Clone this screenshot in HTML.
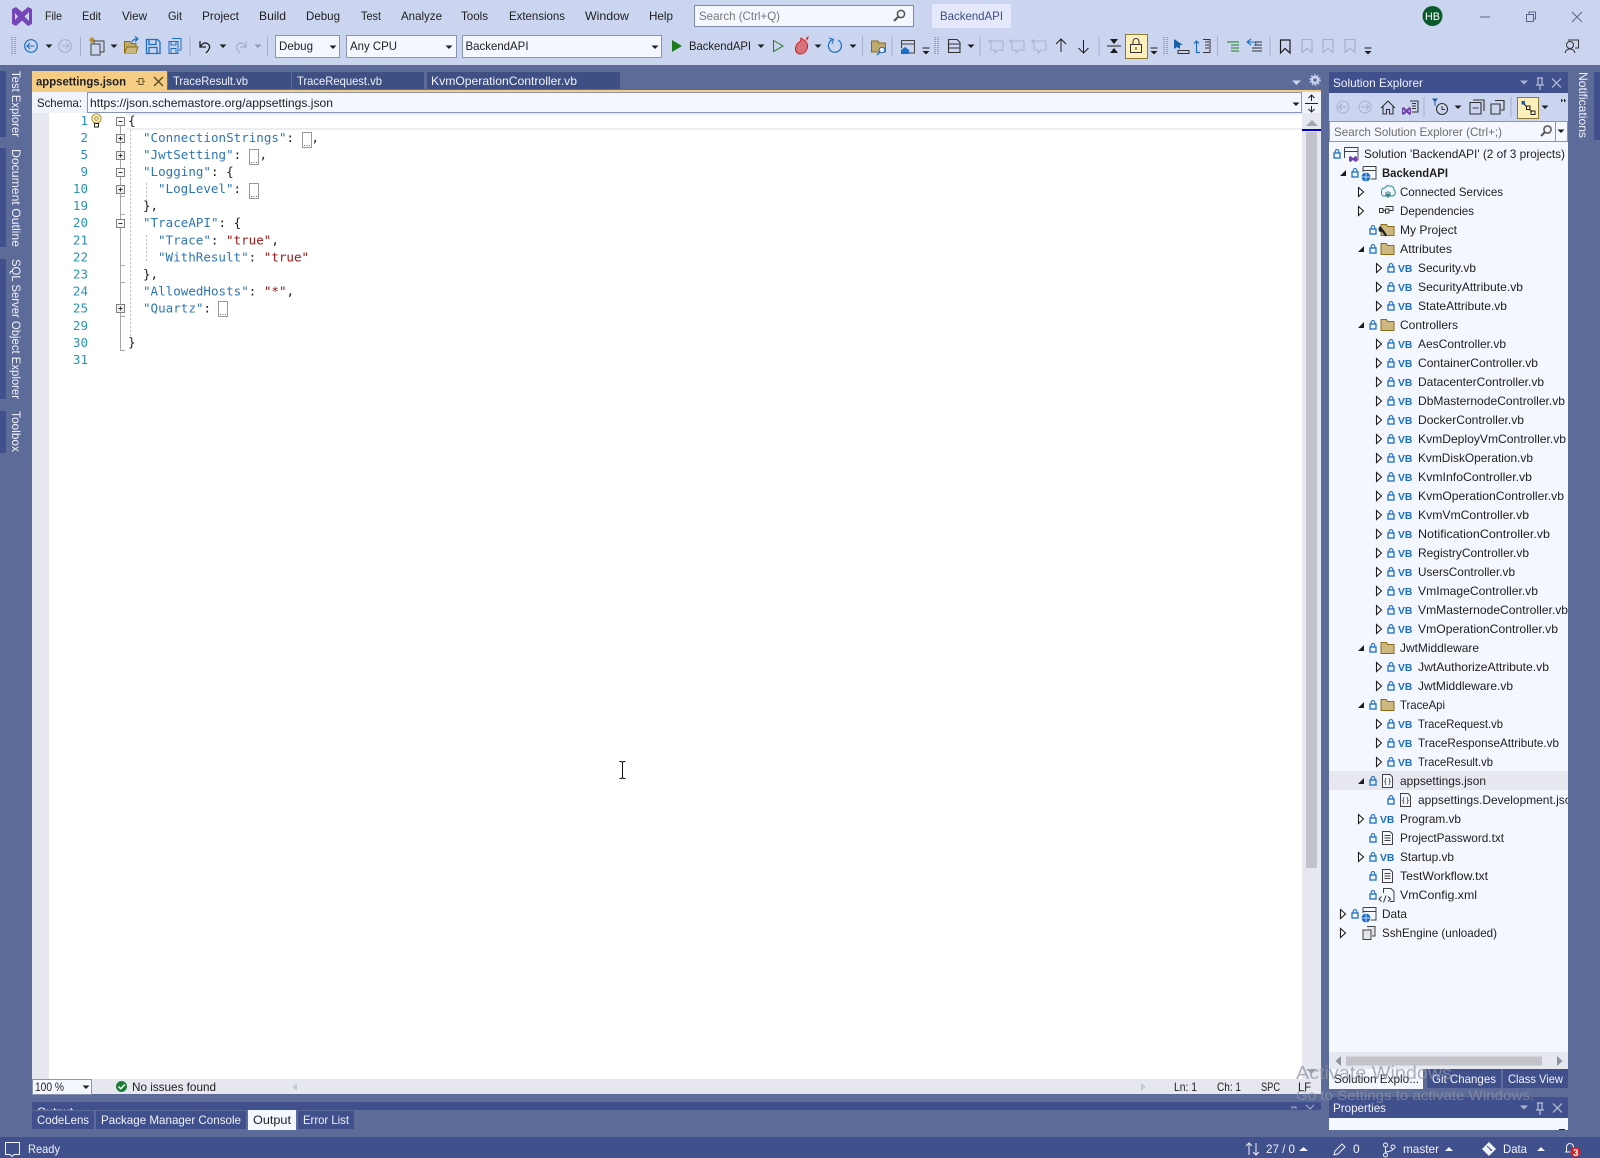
<!DOCTYPE html>
<html>
<head>
<meta charset="utf-8">
<title>BackendAPI - Visual Studio</title>
<style>
html,body{margin:0;padding:0;background:#5D6B99;width:1600px;height:1158px;overflow:hidden}
svg{display:block}
text{font-family:"Liberation Sans",sans-serif;font-size:12px;fill:#1e1e1e;white-space:pre}
.m text{font-family:"DejaVu Sans Mono","Liberation Mono",monospace;font-size:12.55px}
.k{fill:#2e75b6}.s{fill:#a31515}.n{fill:#2b91af}
.w text,text.w{fill:#f0f2fc}
.vb{font-size:10.3px;font-weight:bold;fill:#1b6ec2}
</style>
</head>
<body>
<svg width="1600" height="1158" viewBox="0 0 1600 1158" xmlns="http://www.w3.org/2000/svg">
<defs>
<g id="lk"><rect x="-3" y="-1" width="6" height="5" fill="none" stroke="#1b6ec2" stroke-width="1.3"/><path d="M-1.8-1v-1.6a1.8 1.8 0 0 1 3.6 0v1.6" fill="none" stroke="#1b6ec2" stroke-width="1.1"/></g>
<path id="ar" d="M-2.5-4.5L2.5 0L-2.5 4.5Z" fill="#fff" stroke="#1e1e1e" stroke-width="1.1"/>
<path id="ex" d="M3-3V3H-3Z" fill="#1e1e1e"/>
<path id="fd" d="M-6.5-5.5H-1L0-3.5H6.5V5.5H-6.5Z" fill="#cdb880" stroke="#8a6c14"/>
<path id="dn" d="M-3.5-1.5H3.5L0 2Z" fill="#1e1e1e"/>
<path id="dg" d="M-3.5-1.5H3.5L0 2Z" fill="#8f97b0"/>
<g id="ov"><path d="M-3.5-3H3.5" stroke="#1e1e1e"/><path d="M-3.5 0H3.5L0 3.5Z" fill="#1e1e1e"/></g>
<g id="txt"><path d="M-5-6.5H2.5L5-4V6.5H-5Z" fill="#f6f8ff" stroke="#424242"/><path d="M-3-2.5H3M-3 0H3M-3 2.5H3" stroke="#424242"/></g>
<g id="js"><path d="M-5-6.5H2.5L5-4V6.5H-5Z" fill="#f6f8ff" stroke="#424242"/><path d="M-1.2-2.5Q-2.6-2.5-2.2-.8T-3.2 .5Q-1.8 .5-2.2 2T-1.2 3.5M1.2-2.5Q2.6-2.5 2.2-.8T3.2 .5Q1.8 .5 2.2 2T1.2 3.5" fill="none" stroke="#424242" stroke-width=".8"/></g>
<g id="plus"><rect x="-4" y="-4" width="8" height="8" fill="#eee" stroke="#808080"/><path d="M-2 0H2M0-2V2" stroke="#333"/></g>
<g id="minus"><rect x="-4" y="-4" width="8" height="8" fill="#f8f8f8" stroke="#808080"/><path d="M-2 0H2" stroke="#333"/></g>
<g id="grip"><path d="M0 0V17M3 0V17" stroke="#6d7a9e" stroke-width="1.2" stroke-dasharray="1 1" fill="none"/></g>
<g id="cmt"><path d="M-6-5H6V4H1L-2 7V4H-6Z" fill="none" stroke="#a8b2cc"/><path d="M-7-7V-3M-9-5H-5" stroke="#a8b2cc"/></g>
<g id="bm"><path d="M-5-6.5H5V6.5L0 2.5L-5 6.5Z" fill="none" stroke="#a8b2cc" stroke-width="1.2"/></g>
<clipPath id="treeclip"><rect x="1329" y="142" width="239" height="910"/></clipPath>
<clipPath id="outclip"><rect x="32" y="1102" width="1289" height="8"/></clipPath>
</defs>

<!-- base -->
<rect width="1600" height="1158" fill="#5D6B99"/>
<rect width="1600" height="65" fill="#CCD5F0"/>

<!-- logo -->
<path d="M12 9L16 7L22 12L28 7L32 9V24L28 26L22 20.5L16 26L12 24ZM15 13V20L18 16.5ZM29 12L24.5 16.5L29 21Z" fill="#7645b8" fill-rule="evenodd"/>

<!-- menu -->
<text x="45" y="20" textLength="17" lengthAdjust="spacingAndGlyphs">File</text>
<text x="82" y="20" textLength="19" lengthAdjust="spacingAndGlyphs">Edit</text>
<text x="122" y="20" textLength="25" lengthAdjust="spacingAndGlyphs">View</text>
<text x="168" y="20" textLength="14" lengthAdjust="spacingAndGlyphs">Git</text>
<text x="202" y="20" textLength="37" lengthAdjust="spacingAndGlyphs">Project</text>
<text x="259" y="20" textLength="27" lengthAdjust="spacingAndGlyphs">Build</text>
<text x="306" y="20" textLength="34" lengthAdjust="spacingAndGlyphs">Debug</text>
<text x="361" y="20" textLength="20" lengthAdjust="spacingAndGlyphs">Test</text>
<text x="401" y="20" textLength="41" lengthAdjust="spacingAndGlyphs">Analyze</text>
<text x="461" y="20" textLength="27" lengthAdjust="spacingAndGlyphs">Tools</text>
<text x="509" y="20" textLength="56" lengthAdjust="spacingAndGlyphs">Extensions</text>
<text x="585" y="20" textLength="44" lengthAdjust="spacingAndGlyphs">Window</text>
<text x="649" y="20" textLength="24" lengthAdjust="spacingAndGlyphs">Help</text>

<!-- search + title -->
<rect x="694.5" y="5.5" width="219" height="21" fill="#F5F7FF" stroke="#7f8aa8"/>
<text x="699" y="20" style="fill:#777" textLength="81" lengthAdjust="spacingAndGlyphs">Search (Ctrl+Q)</text>
<circle cx="901" cy="14" r="3.6" fill="none" stroke="#555" stroke-width="1.5"/><path d="M898.5 16.5L894 21" stroke="#555" stroke-width="2"/>
<rect x="932" y="4" width="79" height="24" fill="#E3E9FA"/>
<text x="940" y="20" style="fill:#3d4f81" textLength="63" lengthAdjust="spacingAndGlyphs">BackendAPI</text>

<!-- user / window -->
<circle cx="1432.5" cy="16" r="10" fill="#0b5a2b"/>
<text x="1425" y="20" style="fill:#fff;font-size:11px" textLength="15" lengthAdjust="spacingAndGlyphs">HB</text>
<path d="M1480 17H1490" stroke="#5a6688"/>
<path d="M1526.5 14.5H1533.5V21.5H1526.5ZM1529 14V12H1535.5V19H1534" fill="none" stroke="#5a6688"/>
<path d="M1572 12L1582 22M1582 12L1572 22" stroke="#5a6688"/>

<!-- toolbar -->
<use href="#grip" x="12" y="37"/>
<circle cx="31" cy="46" r="6.3" fill="none" stroke="#1b6ec2" stroke-width="1.2"/><path d="M34.5 46H27.5M30 43L27 46L30 49" fill="none" stroke="#1b6ec2"/>
<use href="#dn" x="49" y="46"/>
<circle cx="65" cy="46" r="6.3" fill="none" stroke="#a8b2cc" stroke-width="1.2"/><path d="M61.5 46H68.5M66 43L69 46L66 49" fill="none" stroke="#a8b2cc"/>
<path d="M80.5 37V56" stroke="#a3afcc"/>
<path d="M94 41H104V52H94Z" fill="none" stroke="#424242"/><path d="M91 44H100V55H91Z" fill="#CCD5F0" stroke="#424242"/>
<path d="M92 37V43M89 40H95M90 38L94 42M94 38L90 42" stroke="#b08a1e"/>
<use href="#dn" x="114" y="46"/>
<path d="M124.5 41.5H130L131.5 43.5H136V53H124.5Z" fill="#c0aa70" stroke="#8a6c14"/><path d="M124.5 53L127 47H138L136 53" fill="#cdb880" stroke="#8a6c14"/><path d="M132 42Q133 39 137 39M135 36.5L138 39L135 41.5" fill="none" stroke="#1b6ec2" stroke-width="1.2"/>
<path d="M146.5 39.5H157.5L160 42V53.5H146.5ZM149 39.5V44.5H156V39.5M149 53.5V47.5H157V53.5" fill="none" stroke="#1b6ec2" stroke-width="1.3"/>
<path d="M172 38.5H181V50H179M169 41.5H178V53.5H169ZM171 41.5V45H176V41.5M171 53.5V48.5H176V53.5" fill="none" stroke="#1b6ec2"/>
<path d="M190 37V56" stroke="#a3afcc"/>
<path d="M200 41V47H206M200.5 46.5Q204 41 208 44T206 53" fill="none" stroke="#1e1e1e" stroke-width="1.3"/>
<use href="#dn" x="223" y="46"/>
<path d="M246 41V47H240M245.5 46.5Q242 41 238 44T240 53" fill="none" stroke="#a8b2cc" stroke-width="1.3"/>
<use href="#dg" x="258" y="46"/>
<path d="M267.5 37V56" stroke="#a3afcc"/>

<rect x="275.5" y="35.5" width="64" height="22" fill="#F5F7FF" stroke="#8a95b5"/>
<text x="279" y="50" textLength="34" lengthAdjust="spacingAndGlyphs">Debug</text><use href="#dn" x="333" y="47"/>
<rect x="346.5" y="35.5" width="110" height="22" fill="#F5F7FF" stroke="#8a95b5"/>
<text x="350" y="50" textLength="47" lengthAdjust="spacingAndGlyphs">Any CPU</text><use href="#dn" x="449" y="47"/>
<rect x="462.5" y="35.5" width="199" height="22" fill="#F5F7FF" stroke="#8a95b5"/>
<text x="465.5" y="50" textLength="63" lengthAdjust="spacingAndGlyphs">BackendAPI</text><use href="#dn" x="655" y="47"/>

<path d="M672 40L682 46L672 52Z" fill="#1e7b1e"/>
<text x="689" y="50" textLength="62" lengthAdjust="spacingAndGlyphs">BackendAPI</text>
<use href="#dn" x="761" y="46"/>
<path d="M773.5 40.5L783 46L773.5 51.5Z" fill="none" stroke="#1e7b1e"/>
<path d="M801 38Q807 42 804 40Q809 44 807 49Q805 54 800 54Q795 53 795.5 48Q796 45 798 43Q801 42 801 38Z" fill="#d9727a" stroke="#c22"/>
<path d="M806 38L809 36L807 41Z" fill="#c22"/>
<use href="#dn" x="818" y="46"/>
<path d="M833 39.5A6.5 6.5 0 1 0 838 40" fill="none" stroke="#1b6ec2" stroke-width="1.2"/><path d="M829 38L833.5 39.5L832 44" fill="none" stroke="#1b6ec2"/>
<use href="#dn" x="853" y="46"/>
<path d="M862.5 37V56" stroke="#a3afcc"/>
<path d="M871.5 41H878L879 43H885.5V52H871.5Z" fill="#c0aa70" stroke="#8a6c14"/><circle cx="882" cy="50" r="2.8" fill="#e8eefc" stroke="#1b6ec2"/><path d="M880 52L877 55" stroke="#1b6ec2" stroke-width="1.3"/>
<path d="M892 37V56" stroke="#a3afcc"/>
<path d="M901.5 40.5H914.5V53H905M901.5 40.5V48M901.5 44H914.5" fill="none" stroke="#424242"/><path d="M901 54V50L905 47L909 50V54Z" fill="#1b6ec2"/>
<use href="#ov" x="926" y="51"/>
<use href="#grip" x="935" y="37"/>
<path d="M948.5 39.5H957L960 42.5V52.5H948.5ZM948.5 44H960M948.5 48H960" fill="none" stroke="#333" stroke-width="1.1"/>
<use href="#dn" x="971" y="46"/>
<path d="M980 37V56" stroke="#a3afcc"/>
<use href="#cmt" x="997" y="46"/><use href="#cmt" x="1018" y="46"/><use href="#cmt" x="1040" y="46"/>
<path d="M1061 52V39M1056 44L1061 39L1066 44" fill="none" stroke="#1e1e1e"/>
<path d="M1083.5 40V53M1078.5 48L1083.5 53L1088.5 48" fill="none" stroke="#1e1e1e"/>
<path d="M1099 37V56" stroke="#a3afcc"/>
<path d="M1107 46H1121" stroke="#1e1e1e"/><path d="M1110 39H1118L1114 44ZM1110 53H1118L1114 48Z" fill="#1e1e1e"/>
<rect x="1125.5" y="34.5" width="22" height="24" fill="#FFEFBB" stroke="#8f7a35"/>
<rect x="1130.5" y="44.5" width="11" height="8" fill="none" stroke="#333"/><path d="M1133 44.5V41.5A3 3 0 0 1 1139 41.5V44.5M1136 47V50" fill="none" stroke="#333"/>
<use href="#ov" x="1154" y="51"/>
<use href="#grip" x="1164" y="37"/>
<path d="M1174 39V49L1177 47L1180 49V45L1183 45Z" fill="#1b5fa8"/><path d="M1178 50.5H1189V53.5H1178Z" fill="none" stroke="#333"/>
<path d="M1203 39.5H1210V52.5H1203M1205 42H1209M1205 45H1209M1205 48H1209" fill="none" stroke="#333"/><path d="M1196.5 41V52.5H1200M1194 43.5L1196.5 41L1199 43.5" fill="none" stroke="#1b6ec2" stroke-width="1.2"/>
<path d="M1217.5 37V56" stroke="#a3afcc"/>
<path d="M1227 42H1239M1231 45H1239M1231 48H1239M1231 51H1239" stroke="#1e7b1e"/>
<path d="M1247 42L1251 39M1247 42L1251 45M1247 42H1254Q1257 42 1255 46" fill="none" stroke="#1b6ec2" stroke-width="1.1"/><path d="M1255 42H1262M1255 45H1262M1252 48H1262M1252 51H1262" stroke="#333"/>
<path d="M1270 37V56" stroke="#a3afcc"/>
<path d="M1280.5 40H1290V53L1285 48.5L1280.5 53Z" fill="none" stroke="#1e1e1e" stroke-width="1.2"/>
<use href="#bm" x="1307" y="46"/><use href="#bm" x="1328" y="46"/><use href="#bm" x="1350" y="46"/>
<use href="#ov" x="1368" y="51"/>
<circle cx="1570" cy="45" r="3.5" fill="none" stroke="#333"/><path d="M1565 53Q1566 49 1570 49Q1574 49 1575 53M1568 40H1578.5V48H1575" fill="none" stroke="#333"/>

<!-- left rail -->
<rect x="0" y="71" width="6" height="66" fill="#40508D"/>
<rect x="0" y="148" width="6" height="99" fill="#40508D"/>
<rect x="0" y="259" width="6" height="140" fill="#40508D"/>
<rect x="0" y="411" width="6" height="42" fill="#40508D"/>
<g class="w">
<text transform="translate(12,71) rotate(90)" textLength="66" lengthAdjust="spacingAndGlyphs">Test Explorer</text>
<text transform="translate(12,149) rotate(90)" textLength="98" lengthAdjust="spacingAndGlyphs">Document Outline</text>
<text transform="translate(12,259) rotate(90)" textLength="140" lengthAdjust="spacingAndGlyphs">SQL Server Object Explorer</text>
<text transform="translate(12,411) rotate(90)" textLength="41" lengthAdjust="spacingAndGlyphs">Toolbox</text>
<text transform="translate(1579,72) rotate(90)" textLength="66" lengthAdjust="spacingAndGlyphs">Notifications</text>
</g>
<rect x="1594" y="72" width="6" height="68" fill="#40508D"/>

<!-- document tabs -->
<rect x="32" y="71" width="135" height="21" fill="#F5CC84"/>
<text x="36" y="85.5" style="font-weight:bold" textLength="90" lengthAdjust="spacingAndGlyphs">appsettings.json</text>
<path d="M136 81.5H139M139 78.5V84.5H143V78.5ZM143 81.5H145" fill="none" stroke="#6b5a2c"/>
<path d="M154 77L163 86M163 77L154 86" stroke="#5a4c22" stroke-width="1.4"/>
<rect x="168" y="72" width="123" height="17" fill="#3D4F83"/>
<rect x="292" y="72" width="132" height="17" fill="#3D4F83"/>
<rect x="427" y="72" width="193" height="17" fill="#3D4F83"/>
<g class="w">
<text x="173" y="85" textLength="75" lengthAdjust="spacingAndGlyphs">TraceResult.vb</text>
<text x="297" y="85" textLength="85" lengthAdjust="spacingAndGlyphs">TraceRequest.vb</text>
<text x="431" y="85" textLength="146" lengthAdjust="spacingAndGlyphs">KvmOperationController.vb</text>
</g>
<rect x="32" y="90" width="1289" height="2" fill="#F5CC84"/>
<path d="M1292 80.5H1301L1296.5 85Z" fill="#CCD5F0"/>
<circle cx="1315" cy="80" r="3" fill="none" stroke="#CCD5F0" stroke-width="2.4"/><circle cx="1315" cy="80" r="5" fill="none" stroke="#CCD5F0" stroke-width="1.4" stroke-dasharray="1.6 1.6"/>

<!-- schema bar -->
<rect x="32" y="92" width="1289" height="21" fill="#F0F3FB"/>
<text x="37" y="107" textLength="45" lengthAdjust="spacingAndGlyphs">Schema:</text>
<rect x="87.5" y="92.5" width="1214" height="20" fill="#F5F7FF" stroke="#8a95b5"/>
<text x="90" y="107" textLength="243" lengthAdjust="spacingAndGlyphs">https://json.schemastore.org/appsettings.json</text>
<use href="#dn" x="1296" y="104"/>
<path d="M1305 103.5H1318" stroke="#1e1e1e"/><path d="M1311.5 95V101M1311.5 106V112" stroke="#1e1e1e"/><path d="M1308.5 98L1311.5 95L1314.5 98M1308.5 109L1311.5 112L1314.5 109" fill="none" stroke="#1e1e1e"/>

<!-- editor -->
<rect x="32" y="113" width="17" height="966" fill="#E6E7EF"/>
<rect x="49" y="113" width="1253" height="966" fill="#fff"/>
<path d="M126 114H1302" stroke="#ECEDF3" stroke-width="2"/>
<path d="M126 129H1302" stroke="#ECEDF3" stroke-width="2"/>

<!-- scrollbar -->
<rect x="1302" y="113" width="19" height="966" fill="#E6E7EF"/>
<path d="M1306 126H1318L1312 120Z" fill="#a0a5b0"/>
<rect x="1306" y="132" width="11" height="736" fill="#C2C3C9"/>
<rect x="1302" y="129" width="19" height="2" fill="#0000c0"/>
<path d="M1306 1069H1317L1311.5 1074Z" fill="#a0a5b0"/>

<!-- outline margin -->
<path d="M120.5 125V350.5H125M120.5 196.5H125M120.5 214.5H125M120.5 265.5H125M120.5 282.5H125M120.5 316.5H125" fill="none" stroke="#a5a5a5"/>
<path d="M130.5 130V336M146.5 183V203M146.5 235V263" stroke="#bdbdbd" stroke-dasharray="2 2"/>
<use href="#minus" x="120.5" y="121.5"/>
<use href="#plus" x="120.5" y="138.5"/>
<use href="#plus" x="120.5" y="155.5"/>
<use href="#minus" x="120.5" y="172.5"/>
<use href="#plus" x="120.5" y="189.5"/>
<use href="#minus" x="120.5" y="223.5"/>
<use href="#plus" x="120.5" y="308.5"/>

<!-- lightbulb -->
<circle cx="96.5" cy="118.5" r="4.6" fill="#fdf6d8" stroke="#a88a2e"/><circle cx="96.5" cy="118.5" r="1.8" fill="none" stroke="#a88a2e"/><rect x="94.5" y="123.5" width="4" height="3.5" fill="#fff" stroke="#222"/>

<!-- code -->
<g class="m">
<text class="n" x="88" y="125" text-anchor="end">1</text>
<text class="n" x="88" y="142" text-anchor="end">2</text>
<text class="n" x="88" y="159" text-anchor="end">5</text>
<text class="n" x="88" y="176" text-anchor="end">9</text>
<text class="n" x="88" y="193" text-anchor="end">10</text>
<text class="n" x="88" y="210" text-anchor="end">19</text>
<text class="n" x="88" y="227" text-anchor="end">20</text>
<text class="n" x="88" y="244.5" text-anchor="end">21</text>
<text class="n" x="88" y="261.5" text-anchor="end">22</text>
<text class="n" x="88" y="278.5" text-anchor="end">23</text>
<text class="n" x="88" y="295.5" text-anchor="end">24</text>
<text class="n" x="88" y="312.5" text-anchor="end">25</text>
<text class="n" x="88" y="330" text-anchor="end">29</text>
<text class="n" x="88" y="347" text-anchor="end">30</text>
<text class="n" x="88" y="364" text-anchor="end">31</text>

<text x="128" y="125">{</text>
<text x="143" y="142"><tspan class="k">"ConnectionStrings"</tspan>: </text>
<text x="143" y="159"><tspan class="k">"JwtSetting"</tspan>: </text>
<text x="143" y="176"><tspan class="k">"Logging"</tspan>: {</text>
<text x="158" y="193"><tspan class="k">"LogLevel"</tspan>: </text>
<text x="143" y="210">},</text>
<text x="143" y="227"><tspan class="k">"TraceAPI"</tspan>: {</text>
<text x="158" y="244.5"><tspan class="k">"Trace"</tspan>: <tspan class="s">"true"</tspan>,</text>
<text x="158" y="261.5"><tspan class="k">"WithResult"</tspan>: <tspan class="s">"true"</tspan></text>
<text x="143" y="278.5">},</text>
<text x="143" y="295.5"><tspan class="k">"AllowedHosts"</tspan>: <tspan class="s">"*"</tspan>,</text>
<text x="143" y="312.5"><tspan class="k">"Quartz"</tspan>: </text>
<text x="128" y="346.5">}</text>
<text x="311.5" y="142">,</text>
<text x="259.5" y="159">,</text>
</g>
<g fill="#fff" stroke="#999">
<rect x="302.5" y="132.5" width="9" height="15"/>
<rect x="249.5" y="149.5" width="9" height="15"/>
<rect x="249.5" y="183.5" width="9" height="15"/>
<rect x="218.5" y="301.5" width="9" height="15"/>
</g>
<g fill="#666">
<path d="M304 145h1v1h-1zM306.5 145h1v1h-1zM309 145h1v1h-1z"/>
<path d="M251 162h1v1h-1zM253.5 162h1v1h-1zM256 162h1v1h-1z"/>
<path d="M251 196h1v1h-1zM253.5 196h1v1h-1zM256 196h1v1h-1z"/>
<path d="M220 314h1v1h-1zM222.5 314h1v1h-1zM225 314h1v1h-1z"/>
</g>

<!-- I-beam cursor -->
<path d="M622.5 762V778M619.5 761.5H621.5L622.5 762.5L623.5 761.5H625.5M619.5 778.5H621.5L622.5 777.5L623.5 778.5H625.5" fill="none" stroke="#111"/>

<!-- editor bottom bar -->
<rect x="32" y="1079" width="1289" height="15" fill="#E6E7EF"/>
<rect x="32.5" y="1079.5" width="59" height="15" fill="#F5F7FF" stroke="#8a95b5"/>
<text x="35" y="1091" textLength="29" lengthAdjust="spacingAndGlyphs">100 %</text>
<use href="#dn" x="86" y="1087"/>
<circle cx="121.5" cy="1086.5" r="5.5" fill="#1e7b34"/><path d="M118.5 1086.5L120.8 1088.8L124.8 1084.5" fill="none" stroke="#fff" stroke-width="1.4"/>
<text x="132" y="1091" textLength="84" lengthAdjust="spacingAndGlyphs">No issues found</text>
<path d="M297 1083V1091L292 1087Z" fill="#c8cad2"/>
<path d="M1141 1083V1091L1146 1087Z" fill="#c8cad2"/>
<text x="1174" y="1091" textLength="23" lengthAdjust="spacingAndGlyphs">Ln: 1</text>
<text x="1217" y="1091" textLength="24" lengthAdjust="spacingAndGlyphs">Ch: 1</text>
<text x="1261" y="1091" textLength="19" lengthAdjust="spacingAndGlyphs">SPC</text>
<text x="1298" y="1091" textLength="13" lengthAdjust="spacingAndGlyphs">LF</text>

<!-- output panel stub -->
<rect x="32" y="1102" width="1289" height="8" fill="#40508D"/>
<text x="37" y="1116" clip-path="url(#outclip)" style="fill:#f0f2fc">Output</text>
<path d="M1292 1109V1107H1296V1109M1306 1105L1310 1109M1314 1105L1310 1109" fill="none" stroke="#aab4d2"/>

<!-- bottom tabs -->
<rect x="32" y="1111" width="62" height="18" fill="#40508D"/>
<rect x="96" y="1111" width="150" height="18" fill="#40508D"/>
<rect x="248" y="1110" width="48" height="20" fill="#F5F7FF"/>
<rect x="298" y="1111" width="56" height="18" fill="#40508D"/>
<g class="w">
<text x="37" y="1124" textLength="52" lengthAdjust="spacingAndGlyphs">CodeLens</text>
<text x="101" y="1124" textLength="140" lengthAdjust="spacingAndGlyphs">Package Manager Console</text>
<text x="303" y="1124" textLength="46" lengthAdjust="spacingAndGlyphs">Error List</text>
</g>
<text x="253" y="1124" textLength="38" lengthAdjust="spacingAndGlyphs">Output</text>

<!-- solution explorer -->
<rect x="1329" y="72" width="239" height="21" fill="#40508D"/>
<text class="w" x="1333" y="87" textLength="90" lengthAdjust="spacingAndGlyphs">Solution Explorer</text>
<path d="M1520 80.5H1528L1524 84.5Z" fill="#aab4d2"/>
<path d="M1537 78H1543M1538 78V85H1542V78M1536 85H1544M1540 85V90" fill="none" stroke="#cfd6ee"/>
<path d="M1552 78.5L1561 87.5M1561 78.5L1552 87.5" stroke="#aab4d2" stroke-width="1.3"/>
<rect x="1329" y="93" width="239" height="28" fill="#CCD5F0"/>
<circle cx="1343" cy="107" r="6" fill="none" stroke="#a8b2cc"/><path d="M1347 107H1339M1342 104L1339 107L1342 110" fill="none" stroke="#a8b2cc"/>
<circle cx="1365" cy="107" r="6" fill="none" stroke="#a8b2cc"/><path d="M1361 107H1369M1366 104L1369 107L1366 110" fill="none" stroke="#a8b2cc"/>
<path d="M1381 108L1388 101L1395 108M1383 106V114H1386.5V109.5H1389.5V114H1393V106" fill="none" stroke="#333" stroke-width="1.1"/>
<path d="M1410 101H1418V112H1412M1412 103.5H1416M1412 106H1416M1412 108.5H1416" fill="none" stroke="#333"/>
<path d="M1402 108L1403.5 107L1406.5 109.5L1409.5 107L1411 108V114L1409.5 115L1406.5 112.5L1403.5 115L1402 114ZM1403.2 109.5V112.5L1405 111ZM1409.8 109.5L1408 111L1409.8 112.5Z" fill="#6e42a8" fill-rule="evenodd"/>
<path d="M1424 97V117" stroke="#a3afcc"/>
<circle cx="1442" cy="109" r="5.5" fill="none" stroke="#333" stroke-width="1.1"/><path d="M1442 106V109.5H1445" fill="none" stroke="#333"/><path d="M1432 98.5H1438L1435 102.5Z" fill="#1b5fa8"/><path d="M1435 102V106" stroke="#1b5fa8"/>
<use href="#dn" x="1458" y="107"/>
<path d="M1470 102.5H1481V114H1470ZM1473 100H1484V111" fill="none" stroke="#333" stroke-width="1.1"/><path d="M1472.5 108H1478.5" stroke="#333"/>
<path d="M1495 100.5H1504V110H1501M1491 104H1500V114H1491Z" fill="none" stroke="#333" stroke-width="1.1"/>
<path d="M1511 97V117" stroke="#a3afcc"/>
<rect x="1517.5" y="97.5" width="21" height="21" fill="#FFEFBB" stroke="#8f7a35"/>
<rect x="1521.5" y="101" width="3.5" height="3.5" fill="#1b5fa8"/>
<rect x="1526.5" y="106" width="3.5" height="3.5" fill="none" stroke="#222"/>
<rect x="1531" y="111" width="4" height="3.5" fill="none" stroke="#222"/>
<path d="M1524 104L1527 107M1529 109L1532 112" stroke="#222"/>
<use href="#dn" x="1545" y="107"/>
<path d="M1561 98.5V102.5L1563 100.5ZM1564 98.5V102.5L1566 100.5Z" fill="#222"/>

<!-- SE search -->
<rect x="1329.5" y="121.5" width="238" height="20" fill="#F5F7FF" stroke="#8a95b5"/>
<text x="1334" y="136" style="fill:#6d6d6d" textLength="168" lengthAdjust="spacingAndGlyphs">Search Solution Explorer (Ctrl+;)</text>
<circle cx="1547.5" cy="129.5" r="3.6" fill="none" stroke="#555" stroke-width="1.5"/><path d="M1545 132L1541 136" stroke="#555" stroke-width="2"/>
<path d="M1555.5 122V141" stroke="#8a95b5"/>
<use href="#dn" x="1561" y="131"/>

<!-- tree -->
<rect x="1329" y="142" width="239" height="910" fill="#F5F7FF"/>
<rect x="1329" y="771" width="239" height="19" fill="#E6E7EF"/>

<g clip-path="url(#treeclip)">
<use href="#lk" x="1337" y="154"/>
<path d="M1344.5 147.5H1358V160H1354.5M1344.5 147.5V158M1344.5 151.5H1358" fill="none" stroke="#424242"/>
<path d="M1349 157L1350.5 156L1353 158L1355.5 156L1357 157V161L1355.5 162L1353 160L1350.5 162L1349 161Z" fill="#6e42a8"/>
<text x="1364" y="158" textLength="201" lengthAdjust="spacingAndGlyphs">Solution 'BackendAPI' (2 of 3 projects)</text>

<use href="#ex" x="1343" y="173"/><use href="#lk" x="1355" y="173"/>
<path d="M1363 166.5H1376V179H1371M1363 166.5V172M1363 170.5H1376" fill="none" stroke="#424242"/>
<circle cx="1366" cy="177" r="4.5" fill="#1b6ec2"/><path d="M1361.5 177H1370.5M1366 172.5V181.5" stroke="#F5F7FF" stroke-width=".7"/>
<text x="1382" y="177" style="font-weight:bold" textLength="66" lengthAdjust="spacingAndGlyphs">BackendAPI</text>

<use href="#ar" x="1361" y="192"/>
<path d="M1381.5 192Q1381.5 188 1385 188Q1386 185 1390 186Q1394 186 1394 190Q1396 191 1395 194Q1394 196 1392 196H1383Q1381.5 195 1381.5 192Z" fill="#F5F7FF" stroke="#2a8a96"/><path d="M1388 191V198M1386 192V195H1390V192" fill="none" stroke="#1a6e6e"/>
<text x="1400" y="196" textLength="103" lengthAdjust="spacingAndGlyphs">Connected Services</text>

<use href="#ar" x="1361" y="211"/>
<path d="M1379.5 208.5H1383V212.5H1379.5ZM1385.5 209H1389V213H1385.5ZM1385.5 206.5H1393V210.5H1389M1383 210.5H1385.5" fill="none" stroke="#333"/>
<text x="1400" y="215" textLength="74" lengthAdjust="spacingAndGlyphs">Dependencies</text>

<use href="#lk" x="1373" y="230"/><use href="#fd" x="1387.5" y="230"/>
<path d="M1380 226L1384 230.5L1387 235L1385.5 236.5L1382 232L1379 231.5L1378.5 228Z" fill="#222"/>
<text x="1400" y="234" textLength="57" lengthAdjust="spacingAndGlyphs">My Project</text>

<use href="#ex" x="1361" y="249"/><use href="#lk" x="1373" y="249"/><use href="#fd" x="1387.5" y="249"/>
<text x="1400" y="253" textLength="52" lengthAdjust="spacingAndGlyphs">Attributes</text>

<use href="#ar" x="1379" y="268"/><use href="#lk" x="1391" y="268"/><text class="vb" x="1398" y="272">VB</text>
<text x="1418" y="272" textLength="58" lengthAdjust="spacingAndGlyphs">Security.vb</text>
<use href="#ar" x="1379" y="287"/><use href="#lk" x="1391" y="287"/><text class="vb" x="1398" y="291">VB</text>
<text x="1418" y="291" textLength="105" lengthAdjust="spacingAndGlyphs">SecurityAttribute.vb</text>
<use href="#ar" x="1379" y="306"/><use href="#lk" x="1391" y="306"/><text class="vb" x="1398" y="310">VB</text>
<text x="1418" y="310" textLength="89" lengthAdjust="spacingAndGlyphs">StateAttribute.vb</text>

<use href="#ex" x="1361" y="325"/><use href="#lk" x="1373" y="325"/><use href="#fd" x="1387.5" y="325"/>
<text x="1400" y="329" textLength="58" lengthAdjust="spacingAndGlyphs">Controllers</text>

<use href="#ar" x="1379" y="344"/><use href="#lk" x="1391" y="344"/><text class="vb" x="1398" y="348">VB</text>
<text x="1418" y="348" textLength="88" lengthAdjust="spacingAndGlyphs">AesController.vb</text>
<use href="#ar" x="1379" y="363"/><use href="#lk" x="1391" y="363"/><text class="vb" x="1398" y="367">VB</text>
<text x="1418" y="367" textLength="120" lengthAdjust="spacingAndGlyphs">ContainerController.vb</text>
<use href="#ar" x="1379" y="382"/><use href="#lk" x="1391" y="382"/><text class="vb" x="1398" y="386">VB</text>
<text x="1418" y="386" textLength="126" lengthAdjust="spacingAndGlyphs">DatacenterController.vb</text>
<use href="#ar" x="1379" y="401"/><use href="#lk" x="1391" y="401"/><text class="vb" x="1398" y="405">VB</text>
<text x="1418" y="405" textLength="147" lengthAdjust="spacingAndGlyphs">DbMasternodeController.vb</text>
<use href="#ar" x="1379" y="420"/><use href="#lk" x="1391" y="420"/><text class="vb" x="1398" y="424">VB</text>
<text x="1418" y="424" textLength="106" lengthAdjust="spacingAndGlyphs">DockerController.vb</text>
<use href="#ar" x="1379" y="439"/><use href="#lk" x="1391" y="439"/><text class="vb" x="1398" y="443">VB</text>
<text x="1418" y="443" textLength="148" lengthAdjust="spacingAndGlyphs">KvmDeployVmController.vb</text>
<use href="#ar" x="1379" y="458"/><use href="#lk" x="1391" y="458"/><text class="vb" x="1398" y="462">VB</text>
<text x="1418" y="462" textLength="115" lengthAdjust="spacingAndGlyphs">KvmDiskOperation.vb</text>
<use href="#ar" x="1379" y="477"/><use href="#lk" x="1391" y="477"/><text class="vb" x="1398" y="481">VB</text>
<text x="1418" y="481" textLength="114" lengthAdjust="spacingAndGlyphs">KvmInfoController.vb</text>
<use href="#ar" x="1379" y="496"/><use href="#lk" x="1391" y="496"/><text class="vb" x="1398" y="500">VB</text>
<text x="1418" y="500" textLength="146" lengthAdjust="spacingAndGlyphs">KvmOperationController.vb</text>
<use href="#ar" x="1379" y="515"/><use href="#lk" x="1391" y="515"/><text class="vb" x="1398" y="519">VB</text>
<text x="1418" y="519" textLength="111" lengthAdjust="spacingAndGlyphs">KvmVmController.vb</text>
<use href="#ar" x="1379" y="534"/><use href="#lk" x="1391" y="534"/><text class="vb" x="1398" y="538">VB</text>
<text x="1418" y="538" textLength="132" lengthAdjust="spacingAndGlyphs">NotificationController.vb</text>
<use href="#ar" x="1379" y="553"/><use href="#lk" x="1391" y="553"/><text class="vb" x="1398" y="557">VB</text>
<text x="1418" y="557" textLength="111" lengthAdjust="spacingAndGlyphs">RegistryController.vb</text>
<use href="#ar" x="1379" y="572"/><use href="#lk" x="1391" y="572"/><text class="vb" x="1398" y="576">VB</text>
<text x="1418" y="576" textLength="97" lengthAdjust="spacingAndGlyphs">UsersController.vb</text>
<use href="#ar" x="1379" y="591"/><use href="#lk" x="1391" y="591"/><text class="vb" x="1398" y="595">VB</text>
<text x="1418" y="595" textLength="120" lengthAdjust="spacingAndGlyphs">VmImageController.vb</text>
<use href="#ar" x="1379" y="610"/><use href="#lk" x="1391" y="610"/><text class="vb" x="1398" y="614">VB</text>
<text x="1418" y="614" textLength="150" lengthAdjust="spacingAndGlyphs">VmMasternodeController.vb</text>
<use href="#ar" x="1379" y="629"/><use href="#lk" x="1391" y="629"/><text class="vb" x="1398" y="633">VB</text>
<text x="1418" y="633" textLength="140" lengthAdjust="spacingAndGlyphs">VmOperationController.vb</text>

<use href="#ex" x="1361" y="648"/><use href="#lk" x="1373" y="648"/><use href="#fd" x="1387.5" y="648"/>
<text x="1400" y="652" textLength="79" lengthAdjust="spacingAndGlyphs">JwtMiddleware</text>
<use href="#ar" x="1379" y="667"/><use href="#lk" x="1391" y="667"/><text class="vb" x="1398" y="671">VB</text>
<text x="1418" y="671" textLength="131" lengthAdjust="spacingAndGlyphs">JwtAuthorizeAttribute.vb</text>
<use href="#ar" x="1379" y="686"/><use href="#lk" x="1391" y="686"/><text class="vb" x="1398" y="690">VB</text>
<text x="1418" y="690" textLength="95" lengthAdjust="spacingAndGlyphs">JwtMiddleware.vb</text>

<use href="#ex" x="1361" y="705"/><use href="#lk" x="1373" y="705"/><use href="#fd" x="1387.5" y="705"/>
<text x="1400" y="709" textLength="45" lengthAdjust="spacingAndGlyphs">TraceApi</text>
<use href="#ar" x="1379" y="724"/><use href="#lk" x="1391" y="724"/><text class="vb" x="1398" y="728">VB</text>
<text x="1418" y="728" textLength="85" lengthAdjust="spacingAndGlyphs">TraceRequest.vb</text>
<use href="#ar" x="1379" y="743"/><use href="#lk" x="1391" y="743"/><text class="vb" x="1398" y="747">VB</text>
<text x="1418" y="747" textLength="141" lengthAdjust="spacingAndGlyphs">TraceResponseAttribute.vb</text>
<use href="#ar" x="1379" y="762"/><use href="#lk" x="1391" y="762"/><text class="vb" x="1398" y="766">VB</text>
<text x="1418" y="766" textLength="75" lengthAdjust="spacingAndGlyphs">TraceResult.vb</text>

<use href="#ex" x="1361" y="781"/><use href="#lk" x="1373" y="781"/><use href="#js" x="1387.5" y="781"/>
<text x="1400" y="785" textLength="86" lengthAdjust="spacingAndGlyphs">appsettings.json</text>
<use href="#lk" x="1391" y="800"/><use href="#js" x="1405.5" y="800"/>
<text x="1418" y="804" textLength="160" lengthAdjust="spacingAndGlyphs">appsettings.Development.json</text>

<use href="#ar" x="1361" y="819"/><use href="#lk" x="1373" y="819"/><text class="vb" x="1380" y="823">VB</text>
<text x="1400" y="823" textLength="61" lengthAdjust="spacingAndGlyphs">Program.vb</text>
<use href="#lk" x="1373" y="838"/><use href="#txt" x="1387.5" y="838"/>
<text x="1400" y="842" textLength="104" lengthAdjust="spacingAndGlyphs">ProjectPassword.txt</text>
<use href="#ar" x="1361" y="857"/><use href="#lk" x="1373" y="857"/><text class="vb" x="1380" y="861">VB</text>
<text x="1400" y="861" textLength="54" lengthAdjust="spacingAndGlyphs">Startup.vb</text>
<use href="#lk" x="1373" y="876"/><use href="#txt" x="1387.5" y="876"/>
<text x="1400" y="880" textLength="88" lengthAdjust="spacingAndGlyphs">TestWorkflow.txt</text>
<use href="#lk" x="1373" y="895"/>
<path d="M1383.5 893V888.5H1391L1394 891.5V901.5H1390" fill="none" stroke="#424242"/>
<path d="M1381.5 896.5L1379 899L1381.5 901.5M1388 896.5L1390.5 899L1388 901.5M1386 895.5L1383.5 902.5" fill="none" stroke="#333"/>
<text x="1400" y="899" textLength="77" lengthAdjust="spacingAndGlyphs">VmConfig.xml</text>

<use href="#ar" x="1343" y="914"/><use href="#lk" x="1355" y="914"/>
<path d="M1363 907.5H1376V920H1371M1363 907.5V913M1363 911.5H1376" fill="none" stroke="#424242"/>
<circle cx="1366" cy="918" r="4.5" fill="#1b6ec2"/><path d="M1361.5 918H1370.5M1366 913.5V922.5" stroke="#F5F7FF" stroke-width=".7"/>
<text x="1382" y="918" textLength="25" lengthAdjust="spacingAndGlyphs">Data</text>

<use href="#ar" x="1343" y="933"/>
<path d="M1367 926.5H1375V936H1372M1363 930H1371V939.5H1363Z" fill="#e4e4e8" stroke="#424242"/>
<text x="1382" y="937" textLength="115" lengthAdjust="spacingAndGlyphs">SshEngine (unloaded)</text>
</g>

<!-- SE horizontal scrollbar -->
<rect x="1329" y="1052" width="239" height="17" fill="#E6E7EF"/>
<path d="M1341 1056V1066L1335.5 1061Z" fill="#8f939e"/>
<rect x="1346" y="1056.5" width="196" height="9" fill="#C2C3C9"/>
<path d="M1557 1056V1066L1562.5 1061Z" fill="#8f939e"/>

<!-- SE tabs -->
<rect x="1329" y="1069" width="94" height="20" fill="#F5F7FF"/>
<text x="1334" y="1083" textLength="85" lengthAdjust="spacingAndGlyphs">Solution Explo...</text>
<rect x="1427" y="1069" width="74" height="19" fill="#40508D"/>
<rect x="1503" y="1069" width="65" height="19" fill="#40508D"/>
<g class="w">
<text x="1432" y="1083" textLength="64" lengthAdjust="spacingAndGlyphs">Git Changes</text>
<text x="1508" y="1083" textLength="55" lengthAdjust="spacingAndGlyphs">Class View</text>
</g>

<!-- Properties -->
<rect x="1329" y="1097" width="239" height="21" fill="#40508D"/>
<text class="w" x="1333" y="1112" textLength="53" lengthAdjust="spacingAndGlyphs">Properties</text>
<path d="M1520 1105.5H1528L1524 1109.5Z" fill="#aab4d2"/>
<path d="M1537 1103H1543M1538 1103V1110H1542V1103M1536 1110H1544M1540 1110V1115" fill="none" stroke="#cfd6ee"/>
<path d="M1553 1103.5L1562 1112.5M1562 1103.5L1553 1112.5" stroke="#aab4d2" stroke-width="1.3"/>
<rect x="1329" y="1118" width="239" height="12" fill="#F5F7FF"/>
<rect x="1559" y="1129" width="6" height="1" fill="#222"/>

<!-- status bar -->
<rect x="0" y="1137" width="1600" height="21" fill="#40508D"/>
<path d="M5.5 1142.5H19.5V1154.5H14L12 1156.5L10 1154.5H5.5Z" fill="none" stroke="#f0f2fc"/>
<text class="w" x="28" y="1153" textLength="32" lengthAdjust="spacingAndGlyphs">Ready</text>
<path d="M1249 1155V1143M1246 1146L1249 1143L1252 1146M1256 1143V1155M1253 1152L1256 1155L1259 1152" fill="none" stroke="#f0f2fc"/>
<text class="w" x="1266" y="1153" textLength="29" lengthAdjust="spacingAndGlyphs">27 / 0</text>
<path d="M1299 1151H1308L1303.5 1147Z" fill="#f0f2fc"/>
<path d="M1334 1155L1335 1151L1342 1144L1345 1147L1338 1154Z" fill="none" stroke="#f0f2fc"/>
<text class="w" x="1353" y="1153">0</text>
<circle cx="1385.5" cy="1145" r="2" fill="none" stroke="#f0f2fc"/><circle cx="1385.5" cy="1155" r="2" fill="none" stroke="#f0f2fc"/><circle cx="1393" cy="1147" r="2" fill="none" stroke="#f0f2fc"/><path d="M1385.5 1147V1153M1393 1149Q1393 1151 1385.5 1152" fill="none" stroke="#f0f2fc"/>
<text class="w" x="1403" y="1153" textLength="36" lengthAdjust="spacingAndGlyphs">master</text>
<path d="M1445 1151H1453L1449 1147Z" fill="#f0f2fc"/>
<path d="M1489 1142L1496 1149L1489 1156L1482 1149Z" fill="#f0f2fc"/><path d="M1487 1146L1491 1150" stroke="#40508D"/><circle cx="1491" cy="1150" r="1" fill="#40508D"/>
<text class="w" x="1503" y="1153" textLength="24" lengthAdjust="spacingAndGlyphs">Data</text>
<path d="M1537 1151H1545L1541 1147Z" fill="#f0f2fc"/>
<path d="M1565 1152H1575M1566.5 1152V1147A3.5 3.5 0 0 1 1573.5 1147V1152" fill="none" stroke="#f0f2fc"/>
<circle cx="1575.5" cy="1152" r="5" fill="#e21b1b"/>
<text x="1573" y="1156" style="fill:#fff;font-size:10px;font-weight:bold">3</text>

<!-- watermark -->
<text x="1296" y="1079" style="font-size:18px;fill:#8f94a4;opacity:.72" textLength="156" lengthAdjust="spacingAndGlyphs">Activate Windows</text>
<text x="1296" y="1100" style="font-size:14px;fill:#8f94a4;opacity:.72" textLength="238" lengthAdjust="spacingAndGlyphs">Go to Settings to activate Windows.</text>
</svg>
</body>
</html>
